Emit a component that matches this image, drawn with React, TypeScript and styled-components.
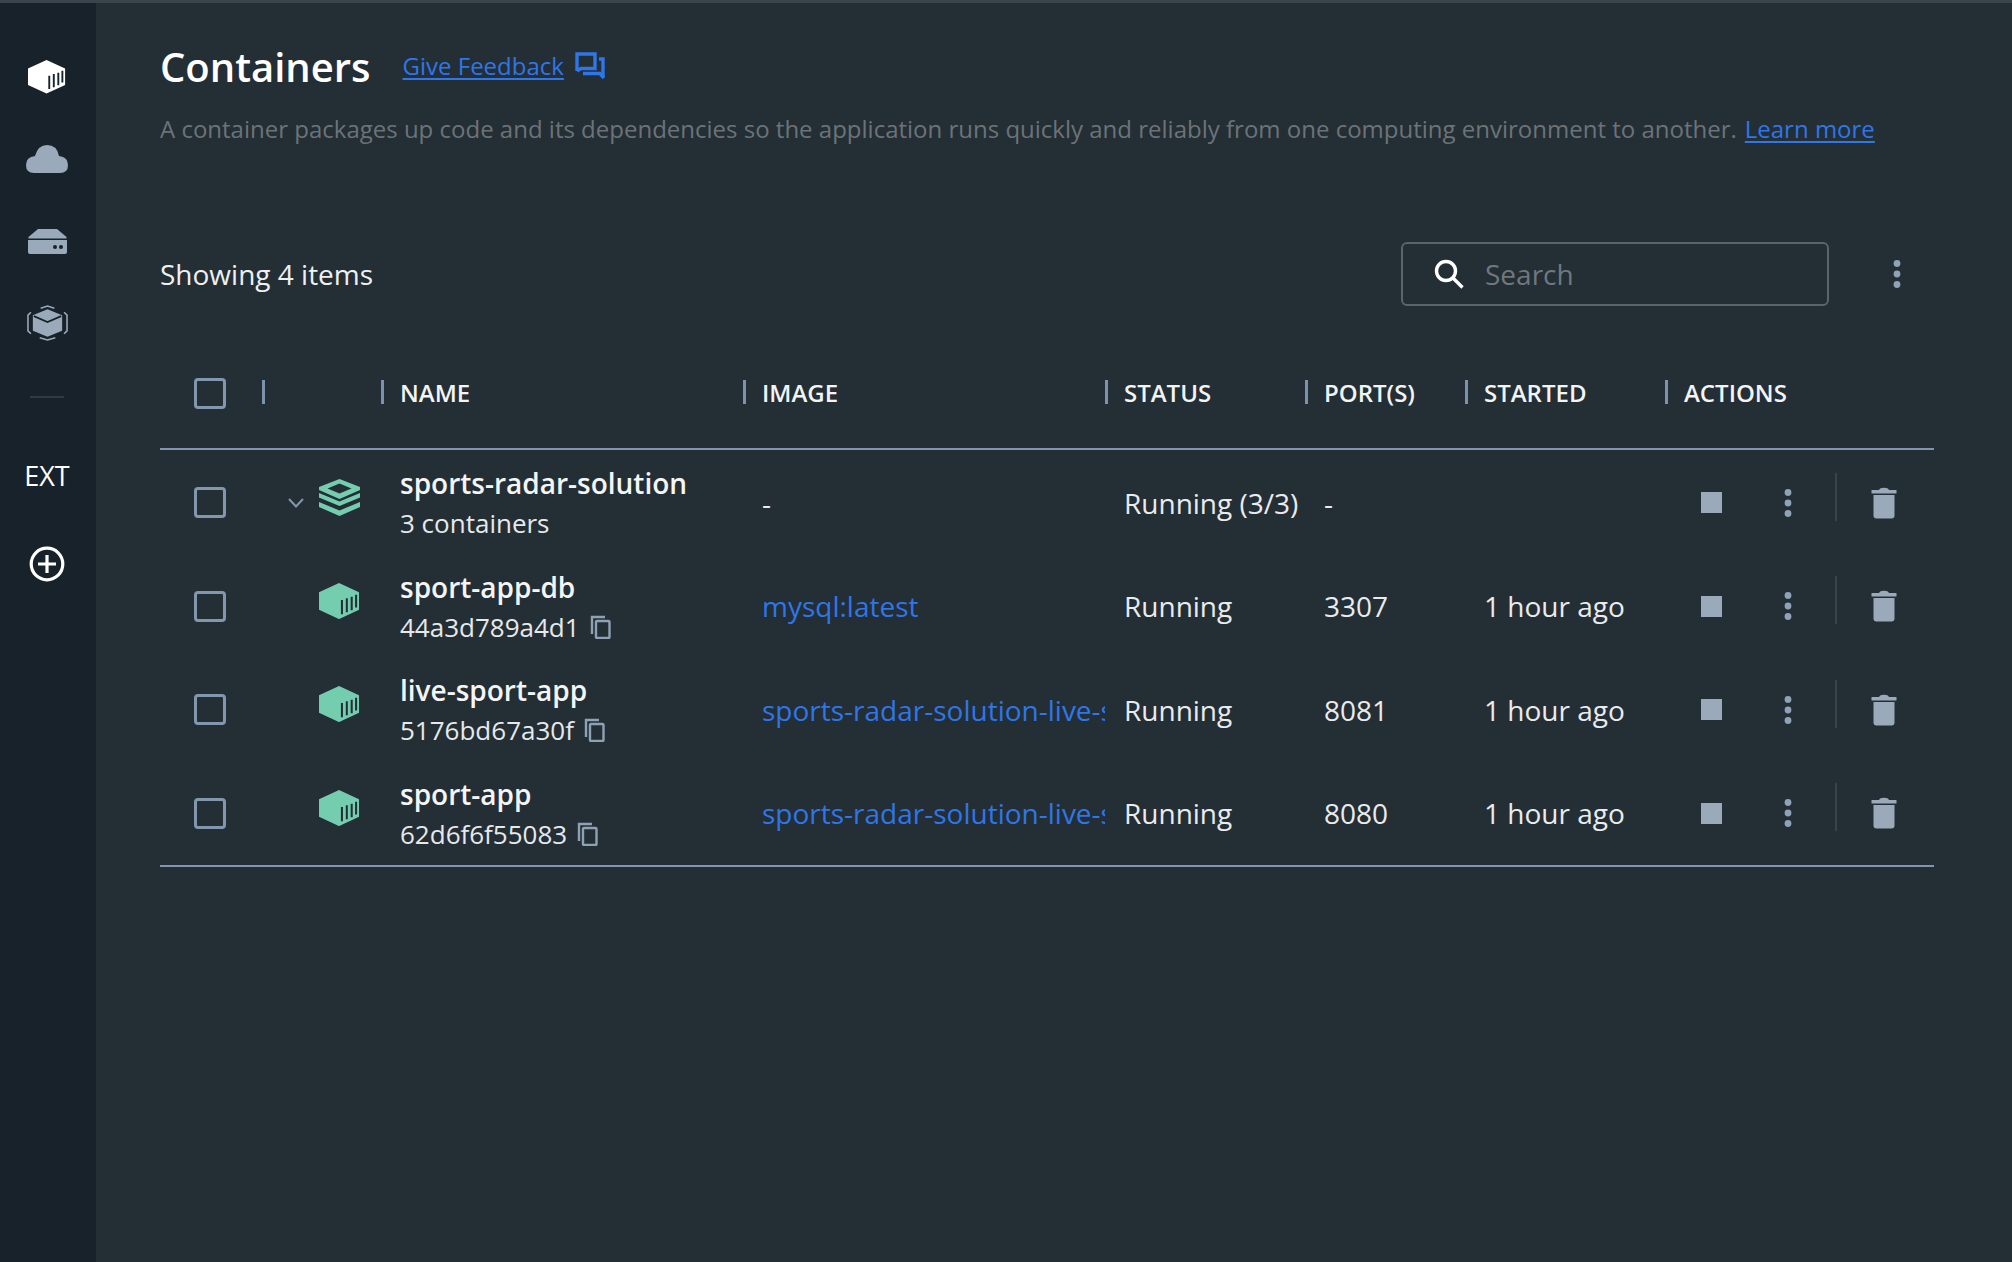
import React from "react";
import styled, { createGlobalStyle } from "styled-components";

const Global = createGlobalStyle`
  html, body { margin: 0; padding: 0; background: #242e35; }
  body { font-family: "Open Sans", "Noto Sans", sans-serif; color: #fff; }
  * { box-sizing: border-box; }
`;

const Shell = styled.div`
  width: 2012px; height: 1262px; display: flex; flex-direction: column; overflow: hidden; background: #242e35;
`;
const TopEdge = styled.div`height: 3px; background: #3a444b; flex: none;`;
const Body = styled.div`flex: 1; display: flex; min-height: 0;`;
const Sidebar = styled.nav`
  width: 96px; flex: none; background: #18222a; display: flex; flex-direction: column; align-items: center; padding: 33px 2px 0 0;
`;
const NavSlot = styled.div`
  width: 94px; height: 82px; display: flex; align-items: center; justify-content: center; flex: none;
`;
const NavRule = styled.div`width: 34px; height: 2px; background: #2f3a42; margin: 32px 0 58px;`;
const ExtLabel = styled.div`font-size: 27px; line-height: 40px; color: #fff; margin-bottom: 50px;`;
const Main = styled.main`flex: 1; padding: 38px 78px 0 64px; min-width: 0;`;
const TitleRow = styled.div`display: flex; align-items: center; height: 54px;`;
const Title = styled.h1`margin: -2px 0 0; font-size: 40px; line-height: 54px; font-weight: 600; color: #fff;`;
const FeedbackLink = styled.a`font-size: 24px; color: #2f76e8; text-decoration: underline; margin: -5px 0 0 32px; text-underline-offset: 3px;`;
const FeedbackIcon = styled.svg`width: 30px; height: 28px; margin: -5px 0 0 11px;`;
const Description = styled.p`margin: 15px 0 0; font-size: 24px; line-height: 38px; color: #6c7378; white-space: nowrap;`;
const LearnMore = styled.a`color: #2f76e8; text-decoration: underline; text-underline-offset: 3px; margin-left: 8px;`;
const Toolbar = styled.div`display: flex; align-items: center; margin-top: 94px; height: 64px;`;
const ItemCount = styled.div`font-size: 28px; color: #eef0f2; flex: 1;`;
const SearchBox = styled.div`
  width: 428px; height: 64px; border: 2px solid #5a646b; border-radius: 6px; display: flex; align-items: center; padding-left: 31px; gap: 21px;
`;
const SearchText = styled.span`font-size: 28px; color: #6f787e;`;
const ToolbarMenu = styled.div`width: 105px; padding-left: 64px; display: flex; justify-content: flex-start;`;
const Table = styled.div`margin-top: 44px; border-bottom: 2px solid #7f96ae;`;
const Grid = styled.div`
  display: grid; grid-template-columns: 102px 119px 362px 362px 200px 160px 200px 268px;
`;
const HeadRow = styled(Grid)`height: 100px; align-items: center; border-bottom: 2px solid #7f96ae; padding-bottom: 12px;`;
const HeadCell = styled.div<{ $sep?: boolean }>`
  height: 24px; margin-top: -2px; display: flex; align-items: center; padding-left: 16px;
  border-left: ${(p) => (p.$sep ? "3px solid #7c93ad" : "none")};
  font-size: 24px; font-weight: 600; color: #f2f4f6; white-space: nowrap;
`;
const CheckCell = styled.div`display: flex; align-items: center; padding-left: 34px;`;
const Box = styled.div`width: 32px; height: 31px; border: 3.5px solid #8296ad; border-radius: 4px;`;
const RowGroup = styled.div`padding-top: 1px;`;
const Row = styled(Grid)`height: 103.5px; align-items: center;`;
const IconCell = styled.div`display: flex; align-items: center; height: 50px; padding: 0 0 11px 26px; gap: 15px;`;
const Chevron = styled.svg`width: 16px; height: 10px; position: relative; top: 6px;`;
const ChevronSpacer = styled.div`width: 16px;`;
const NameCell = styled.div`padding-left: 19px; display: flex; flex-direction: column; margin-top: 2px;`;
const Name = styled.div`font-size: 28px; line-height: 38px; font-weight: 600; color: #f4f5f6; white-space: nowrap;`;
const Sub = styled.div`font-size: 26px; line-height: 40px; margin-top: 1px; color: #e6e9ec; display: flex; align-items: center; gap: 10px; white-space: nowrap;`;
const TextCell = styled.div<{ $link?: boolean }>`
  padding-left: 19px; font-size: 28px; color: ${(p) => (p.$link ? "#2f76e8" : "#e9ebed")}; white-space: nowrap; overflow: hidden;
`;
const ActionsCell = styled.div`display: flex; align-items: center; height: 48px; padding-left: 36px;`;
const StopSquare = styled.div`width: 21px; height: 21px; background: #9aaabb; flex: none;`;
const MenuSlot = styled.div`width: 76px; display: flex; justify-content: center; margin-left: 28px; flex: none;`;
const VRule = styled.div`width: 2px; height: 48px; background: #38434b; margin-left: 9px; flex: none; position: relative; top: -6px;`;
const TrashSlot = styled.div`margin-left: 34px; display: flex;`;

const Cube: React.FC<{ fill: string; bar: string; w?: number }> = ({ fill, bar, w = 42 }) => (
  <svg width={w} height={(w * 37) / 42} viewBox="0 0 42 37">
    <path d="M20.5 0 L41 9.5 V27.5 L20.5 37 L0 27.5 V9.5 Z" fill={fill} strokeLinejoin="round" />
    <path d="M23.5 32 V17.5 M28.5 30 V15.5 M33.5 28 V14 M38 25 V12" stroke={bar} strokeWidth="2.1" fill="none" />
  </svg>
);
const Dots = () => (
  <svg width="8" height="30" viewBox="0 0 8 30" fill="#8fa2b6">
    <circle cx="4" cy="4.5" r="3.4" /><circle cx="4" cy="15" r="3.4" /><circle cx="4" cy="25.5" r="3.4" />
  </svg>
);
const Trash = () => (
  <svg width="26" height="32" viewBox="0 0 26 32" fill="#9aaabb">
    <path d="M9 1.5 Q13 0 17 1.5 L18 3 H25.5 V6.5 H.5 V3 H8 Z" />
    <path d="M2.5 8 H23.5 V28.5 Q23.5 31.5 20.5 31.5 H5.5 Q2.5 31.5 2.5 28.5 Z" />
  </svg>
);
const CopyIcon = () => (
  <svg width="21" height="24" viewBox="0 0 21 24" fill="none" stroke="#8ea1b5" strokeWidth="2.4">
    <path d="M2 19 V2 H15" />
    <rect x="6" y="6" width="13.5" height="17" rx="1" />
  </svg>
);
const Stack = () => (
  <svg width="41" height="37" viewBox="0 0 41 37" fill="#75cdb0">
    <path fillRule="evenodd" d="M20.5 0 L41 8 V11 L20.5 20 L0 11 V8 Z M20.5 4.5 L8.5 9.5 L20.5 14.5 L32.5 9.5 Z" />
    <path d="M0 14 L20.5 22.5 L41 14 V18.5 L20.5 27 L0 18.5 Z" />
    <path d="M0 23 L20.5 31.5 L41 23 V28 L20.5 37 L0 28 Z" />
  </svg>
);

const rows = [
  { name: "sport-app-db", id: "44a3d789a4d1", image: "mysql:latest", port: "3307" },
  { name: "live-sport-app", id: "5176bd67a30f", image: "sports-radar-solution-live-sport-app", port: "8081" },
  { name: "sport-app", id: "62d6f6f55083", image: "sports-radar-solution-live-sport-app", port: "8080" },
];

const Actions = () => (
  <ActionsCell>
    <StopSquare />
    <MenuSlot><Dots /></MenuSlot>
    <VRule />
    <TrashSlot><Trash /></TrashSlot>
  </ActionsCell>
);

export default function App() {
  return (
    <Shell>
      <Global />
      <TopEdge />
      <Body>
        <Sidebar>
          <NavSlot><Cube fill="#fff" bar="#18222a" w={38} /></NavSlot>
          <NavSlot>
            <svg width="42" height="28" viewBox="0 0 42 28" fill="#9aaabb">
              <path d="M8 28 Q0 28 0 20 Q0 12 9 11 Q12 0 21 0 Q31 0 33 11 Q42 12 42 20 Q42 28 34 28 Z" />
            </svg>
          </NavSlot>
          <NavSlot>
            <svg width="39" height="25" viewBox="0 0 39 25">
              <path d="M10 0 H29 L38.5 8 V9.5 H.5 V8 Z" fill="#9aaabb" />
              <path d="M0 11 H39 V23 Q39 25 37 25 H2 Q0 25 0 23 Z" fill="#9aaabb" />
              <circle cx="27" cy="18" r="2" fill="#18222a" /><circle cx="33" cy="18" r="2" fill="#18222a" />
            </svg>
          </NavSlot>
          <NavSlot>
            <svg width="41" height="36" viewBox="0 0 42 36">
              <path d="M21 4 L36 10 V26 L21 32 L6 26 V10 Z" fill="#9aaabb" />
              <path d="M7 11 L21 17 L35 11" stroke="#18222a" strokeWidth="1.8" fill="none" />
              <path d="M14 2.8 L21 .6 L28 2.8 M38 7 L41 10 V26 L38 29 M4 7 L1 10 V26 L4 29 M13 33 L21 35.4 L29 33" stroke="#9aaabb" strokeWidth="1.6" fill="none" />
            </svg>
          </NavSlot>
          <NavRule />
          <ExtLabel>EXT</ExtLabel>
          <svg width="36" height="36" viewBox="0 0 36 36" fill="none" stroke="#fff" strokeWidth="3.2">
            <circle cx="18" cy="18" r="15.8" /><path d="M9 18 H27 M18 9 V27" />
          </svg>
        </Sidebar>
        <Main>
          <TitleRow>
            <Title>Containers</Title>
            <FeedbackLink>Give Feedback</FeedbackLink>
            <FeedbackIcon viewBox="0 0 30 28" fill="none" stroke="#2f76e8" strokeWidth="3.4">
              <path d="M2 19 V2 H20 V16.5 H6 L2 19" />
              <path d="M24 7 H28 V25" />
              <path d="M8 21.5 H25 L29 26" />
            </FeedbackIcon>
          </TitleRow>
          <Description>
            A container packages up code and its dependencies so the application runs quickly and reliably from one computing environment to another.
            <LearnMore>Learn more</LearnMore>
          </Description>
          <Toolbar>
            <ItemCount>Showing 4 items</ItemCount>
            <SearchBox>
              <svg width="30" height="30" viewBox="0 0 30 30" fill="none" stroke="#fff" strokeWidth="3.4">
                <circle cx="12" cy="12" r="9.5" /><path d="M19 19 L28.5 28.5" />
              </svg>
              <SearchText>Search</SearchText>
            </SearchBox>
            <ToolbarMenu><Dots /></ToolbarMenu>
          </Toolbar>
          <Table>
            <HeadRow>
              <CheckCell><Box /></CheckCell>
              <HeadCell $sep />
              <HeadCell $sep>NAME</HeadCell>
              <HeadCell $sep>IMAGE</HeadCell>
              <HeadCell $sep>STATUS</HeadCell>
              <HeadCell $sep>PORT(S)</HeadCell>
              <HeadCell $sep>STARTED</HeadCell>
              <HeadCell $sep>ACTIONS</HeadCell>
            </HeadRow>
            <RowGroup>
              <Row>
                <CheckCell><Box /></CheckCell>
                <IconCell>
                  <Chevron viewBox="0 0 16 10" fill="none" stroke="#8296ad" strokeWidth="2"><path d="M1 1 L8 8.5 L15 1" /></Chevron>
                  <Stack />
                </IconCell>
                <NameCell>
                  <Name>sports-radar-solution</Name>
                  <Sub>3 containers</Sub>
                </NameCell>
                <TextCell>-</TextCell>
                <TextCell>Running (3/3)</TextCell>
                <TextCell>-</TextCell>
                <TextCell />
                <Actions />
              </Row>
              {rows.map((r) => (
                <Row key={r.name}>
                  <CheckCell><Box /></CheckCell>
                  <IconCell>
                    <ChevronSpacer />
                    <Cube fill="#75cdb0" bar="#242e35" w={41} />
                  </IconCell>
                  <NameCell>
                    <Name>{r.name}</Name>
                    <Sub>{r.id}<CopyIcon /></Sub>
                  </NameCell>
                  <TextCell $link>{r.image}</TextCell>
                  <TextCell>Running</TextCell>
                  <TextCell>{r.port}</TextCell>
                  <TextCell>1 hour ago</TextCell>
                  <Actions />
                </Row>
              ))}
            </RowGroup>
          </Table>
        </Main>
      </Body>
    </Shell>
  );
}
